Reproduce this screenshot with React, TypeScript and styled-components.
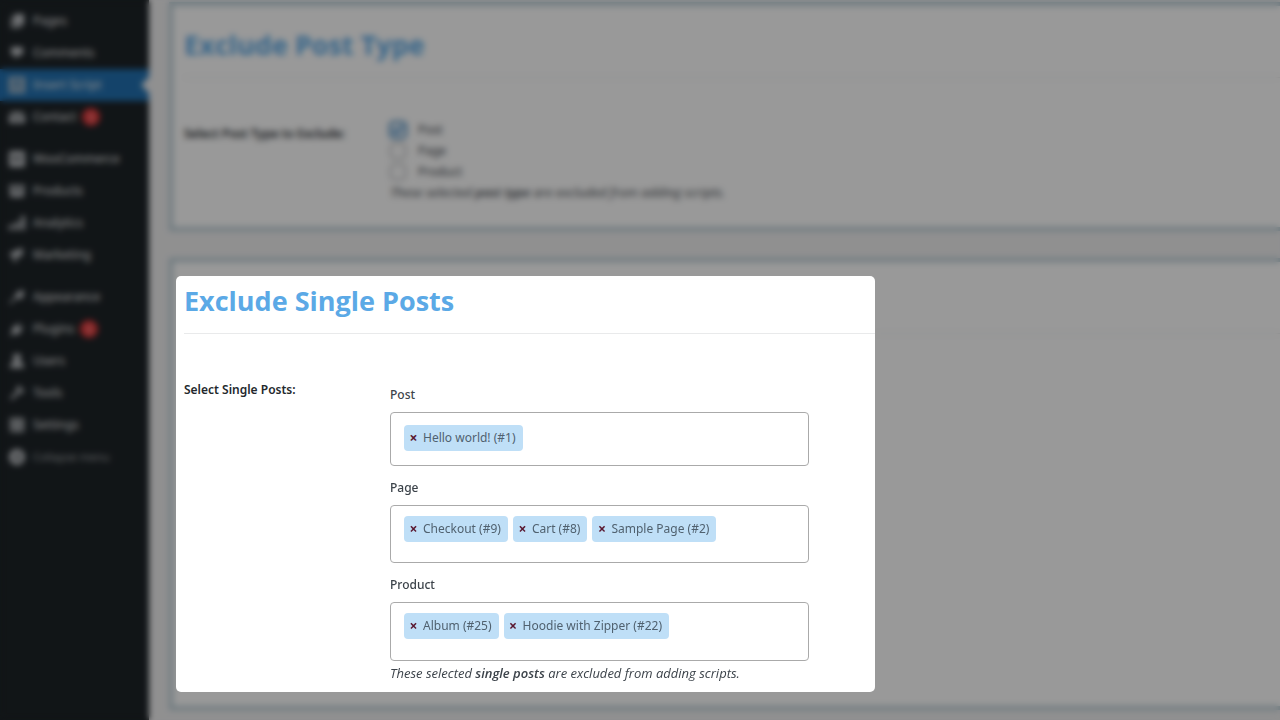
import React from "react";
import styled, { createGlobalStyle, css } from "styled-components";

const GlobalStyle = createGlobalStyle`
  *, *::before, *::after { box-sizing: border-box; }
  html { background: #f0f0f1; }
  body {
    margin: 0;
    font-family: "Noto Sans", "Open Sans", sans-serif;
    font-size: 12px;
    line-height: 20px;
    color: #3c434a;
  }
`;

const Layout = styled.div`
  display: grid;
  grid-template-columns: 149px minmax(0, 1fr);
  min-height: 100vh;
  overflow: hidden;
`;

const Sidebar = styled.nav`
  background: #1d2327;
  padding-top: 5px;
`;

const MenuGroup = styled.ul`
  list-style: none;
  margin: 0 0 10px;
  padding: 0;
`;

const itemLook = css`
  display: flex;
  align-items: center;
  gap: 8px;
  width: 100%;
  height: 32px;
  padding: 0 0 0 9px;
  text-decoration: none;
  white-space: nowrap;
`;

const MenuLink = styled.a<{ $active?: boolean }>`
  ${itemLook}
  color: #f0f0f1;
  background: ${(p) => (p.$active ? "#2271b1" : "transparent")};
`;

const CollapseButton = styled.button`
  ${itemLook}
  border: 0;
  background: transparent;
  color: #a7aaad;
  font: inherit;
  font-size: 11px;
`;

const MenuIcon = styled.svg`
  width: 16px;
  height: 16px;
  flex: none;
  fill: #c3c6ca;
`;

const Count = styled.span`
  display: grid;
  place-items: center;
  width: 18px;
  height: 18px;
  margin-left: -2px;
  border-radius: 9px;
  background: #e63b3d;
  color: #fff;
  font-size: 11px;
`;

const ActiveArrow = styled.span`
  margin-left: auto;
  border: 8px solid transparent;
  border-right-color: #f0f0f1;
`;

const Content = styled.main`
  display: flex;
  flex-direction: column;
  gap: 27px;
  padding: 2px 0 9px 20px;
  background: #f0f0f1;
`;

const Card = styled.section`
  border: 4px solid #b8ccd5;
  border-right: 0;
  background: #fff;
`;

const PlainCard = styled(Card)`
  padding: 19px 0 25px 11px;
`;

const HighlightCard = styled(Card)`
  display: grid;
  grid-template-columns: 699px minmax(0, 1fr);
  padding: 14px 0 14px 3px;
`;

const Scrim = styled.div`
  position: fixed;
  inset: 0;
  z-index: 1;
  background: rgba(0, 0, 0, 0.4);
  backdrop-filter: blur(3px);
`;

const Spotlight = styled.div`
  position: relative;
  z-index: 2;
  padding: 5px 0 9px 8px;
  border-radius: 5px;
  background: #fff;
`;

const Title = styled.h2`
  margin: 0;
  font-family: "Open Sans", "Noto Sans", sans-serif;
  font-size: 27px;
  line-height: 40px;
  font-weight: 700;
  color: #5ba9e6;
`;

const Rule = styled.hr`
  height: 1px;
  margin: 12px 0 0;
  border: 0;
  background: #e9eaeb;
`;

const RuleTail = styled.div`
  padding-top: 45px;
`;

const FormRow = styled.div`
  display: grid;
  grid-template-columns: 206px minmax(0, 1fr);
`;

const RowLabel = styled.div`
  padding-top: 46px;
  font-weight: 600;
  color: #23282d;
`;

const Options = styled.div`
  padding-top: 41px;
`;

const Option = styled.label`
  display: flex;
  align-items: center;
  gap: 12px;
  height: 21px;
`;

const CheckBox = styled.input`
  display: grid;
  place-items: center;
  appearance: none;
  width: 16px;
  height: 16px;
  margin: 0;
  border: 1px solid #8c8f94;
  border-radius: 4px;
  background: #fff;

  &:checked {
    border-color: #2271b1;
    box-shadow: 0 0 0 1px #2271b1;
  }
  &:checked::before {
    content: "";
    width: 10px;
    height: 6px;
    border: solid #3582c4;
    border-width: 0 0 3px 3px;
    transform: translateY(-1px) rotate(-45deg);
  }
`;

const Note = styled.p<{ $top: number }>`
  margin: ${(p) => p.$top}px 0 0;
  font-family: "Open Sans", "Noto Sans", sans-serif;
  font-size: 13px;
  font-style: italic;
  color: #3c434a;

  b {
    font-weight: 600;
  }
`;

const Fields = styled.div`
  display: flex;
  flex-direction: column;
  gap: 12px;
  padding-top: 51px;
`;

const Field = styled.div`
  display: flex;
  flex-direction: column;
  gap: 7px;
`;

const FieldLabel = styled.label`
  font-weight: 500;
`;

const TagBox = styled.div<{ $top: number; $bottom: number }>`
  display: flex;
  align-items: center;
  gap: 5px;
  width: 419px;
  padding: ${(p) => p.$top}px 13px ${(p) => p.$bottom}px;
  border: 1px solid #aaa;
  border-radius: 4px;
  background: #fff;
`;

const Tag = styled.span`
  display: flex;
  align-items: center;
  gap: 5px;
  height: 26px;
  padding: 0 7px 0 5px;
  border-radius: 4px;
  background: #bfdff7;
  color: #50616f;
  white-space: nowrap;
`;

const RemoveButton = styled.button`
  width: 9px;
  padding: 0;
  border: 0;
  background: transparent;
  color: #5a1830;
  font: inherit;
  font-size: 14px;
  font-weight: 700;
  line-height: 20px;
`;

const TagInput = styled.input`
  flex: 1;
  min-width: 0;
  height: 26px;
  padding: 0;
  border: 0;
  outline: 0;
  background: transparent;
  font: inherit;
`;

const icons: Record<string, string> = {
  pages: "M5 1h10v11H5zM2 4h2v9h8v2H2z",
  comments: "M3 2h10a1 1 0 0 1 1 1v6a1 1 0 0 1-1 1h-3l-4 4v-4H3a1 1 0 0 1-1-1V3a1 1 0 0 1 1-1z",
  script: "M0 0h16v16H0zM3 3v3h10V3zM3 8v5h3V8zM8 8v2h5V8zM8 11v2h5v-2z",
  mail: "M0 3h16l-8 6zM0 5l8 6 8-6v9H0z",
  woo: "M1 0h14l1 1v14l-1 1H1l-1-1V1zM3 5l2 6 3-4 2 4 3-6h-2l-1 3-2-3-2 3-1-3z",
  products: "M0 2h16v3H0zM1 6h14v8H1zM5 7v2h6V7z",
  analytics: "M0 10h4v5H0zM6 7h4v8H6zM12 1h4v14h-4z",
  marketing: "M1 6l9-4 4-1-1 9-4-1-2 1 1 5H5l-1-5-3-1z",
  appearance: "M15 1l-1 8-5 1-2-1-5 6-2-1 6-6V6l4-4z",
  plugins: "M10 1l1 1-2 3 2 2 3-2 1 1-3 3c0 4-4 5-7 4l-3 2-1-1 2-3c0-4 1-6 5-7z",
  users: "M8 1a3 3 0 0 1 2 6l1 2c3 0 4 2 4 6H1c0-4 1-6 4-6l1-2a3 3 0 0 1 2-6z",
  tools: "M15 4l-3 1-1-1 1-3C8 0 7 3 8 6l-7 7 2 2 7-7c3 1 6-1 5-4z",
  settings: "M1 1h14v14H1zM3 4v2h5V4zM10 3v4h2V3zM3 9v4h2V9zM7 10v2h6v-2z",
  collapse: "M8 0a8 8 0 1 0 0 16A8 8 0 0 0 8 0zM10 4v8L5 8z",
};

type Item = { icon: string; text: string; count?: number; active?: boolean };

const menu: Item[][] = [
  [
    { icon: "pages", text: "Pages" },
    { icon: "comments", text: "Comments" },
    { icon: "script", text: "Insert Script", active: true },
    { icon: "mail", text: "Contact", count: 1 },
  ],
  [
    { icon: "woo", text: "WooCommerce" },
    { icon: "products", text: "Products" },
    { icon: "analytics", text: "Analytics" },
    { icon: "marketing", text: "Marketing" },
  ],
  [
    { icon: "appearance", text: "Appearance" },
    { icon: "plugins", text: "Plugins", count: 1 },
    { icon: "users", text: "Users" },
    { icon: "tools", text: "Tools" },
    { icon: "settings", text: "Settings" },
  ],
];

const postTypes = [
  { name: "Post", checked: true },
  { name: "Page", checked: false },
  { name: "Product", checked: false },
];

const singlePosts = [
  { name: "Post", top: 12, bottom: 14, tags: ["Hello world! (#1)"] },
  { name: "Page", top: 10, bottom: 20, tags: ["Checkout (#9)", "Cart (#8)", "Sample Page (#2)"] },
  { name: "Product", top: 10, bottom: 21, tags: ["Album (#25)", "Hoodie with Zipper (#22)"] },
];

function Icon({ name }: { name: string }) {
  return (
    <MenuIcon viewBox="0 0 16 16" aria-hidden="true">
      <path fillRule="evenodd" d={icons[name]} />
    </MenuIcon>
  );
}

export default function App() {
  return (
    <>
      <GlobalStyle />
      <Layout>
        <Sidebar>
          {menu.map((group, i) => (
            <MenuGroup key={i}>
              {group.map((item) => (
                <li key={item.text}>
                  <MenuLink href="#" $active={item.active}>
                    <Icon name={item.icon} />
                    {item.text}
                    {item.count && <Count>{item.count}</Count>}
                    {item.active && <ActiveArrow />}
                  </MenuLink>
                </li>
              ))}
              {i === menu.length - 1 && (
                <li>
                  <CollapseButton type="button">
                    <Icon name="collapse" />
                    Collapse menu
                  </CollapseButton>
                </li>
              )}
            </MenuGroup>
          ))}
        </Sidebar>
        <Content>
          <PlainCard>
            <Title>Exclude Post Type</Title>
            <Rule />
            <FormRow>
              <RowLabel>Select Post Type to Exclude:</RowLabel>
              <Options>
                {postTypes.map((type) => (
                  <Option key={type.name}>
                    <CheckBox type="checkbox" defaultChecked={type.checked} />
                    {type.name}
                  </Option>
                ))}
                <Note $top={0}>
                  These selected <b>post type</b> are excluded from adding scripts.
                </Note>
              </Options>
            </FormRow>
          </PlainCard>
          <HighlightCard>
            <Spotlight>
              <Title>Exclude Single Posts</Title>
              <Rule />
              <FormRow>
                <RowLabel>Select Single Posts:</RowLabel>
                <div>
                  <Fields>
                    {singlePosts.map((field) => (
                      <Field key={field.name}>
                        <FieldLabel htmlFor={`single-${field.name}`}>{field.name}</FieldLabel>
                        <TagBox $top={field.top} $bottom={field.bottom}>
                          {field.tags.map((tag) => (
                            <Tag key={tag}>
                              <RemoveButton type="button" aria-label={`Remove ${tag}`}>
                                ×
                              </RemoveButton>
                              {tag}
                            </Tag>
                          ))}
                          <TagInput id={`single-${field.name}`} type="text" />
                        </TagBox>
                      </Field>
                    ))}
                  </Fields>
                  <Note $top={2}>
                    These selected <b>single posts</b> are excluded from adding scripts.
                  </Note>
                </div>
              </FormRow>
            </Spotlight>
            <RuleTail>
              <Rule />
            </RuleTail>
          </HighlightCard>
        </Content>
      </Layout>
      <Scrim />
    </>
  );
}
